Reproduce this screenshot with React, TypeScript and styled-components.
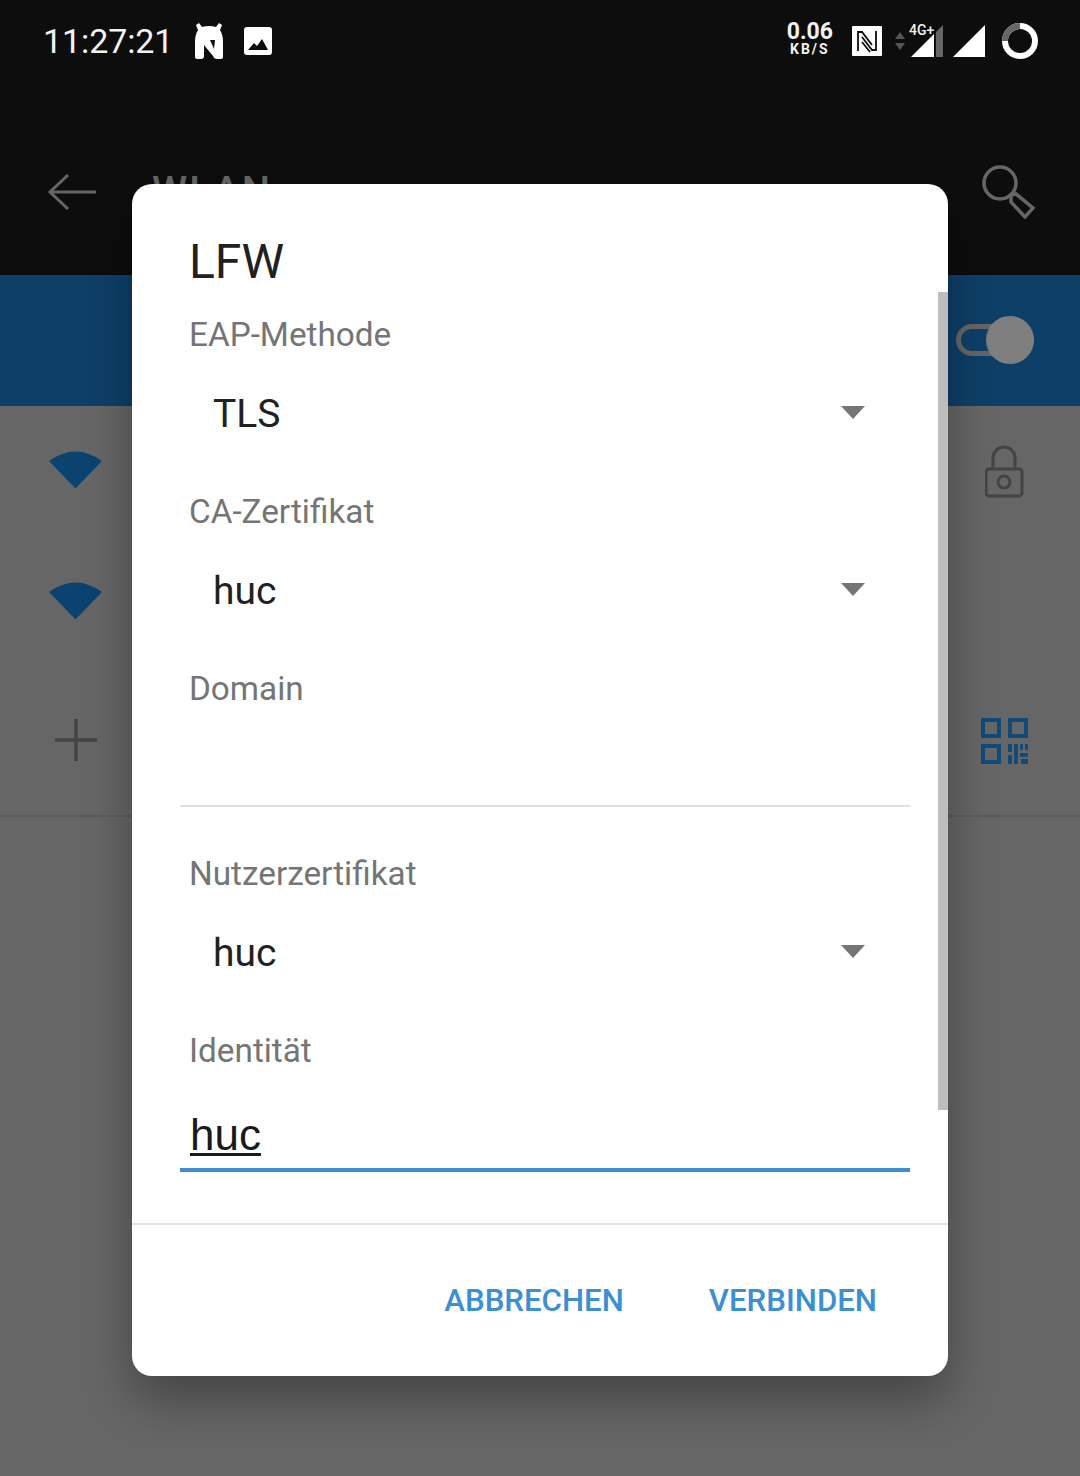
import React from "react";
import styled, { createGlobalStyle } from "styled-components";

const Global = createGlobalStyle`
  html, body { margin: 0; padding: 0; background: #666; }
  * { box-sizing: border-box; }
`;

const Page = styled.div`
  position: relative;
  width: 1080px;
  height: 1476px;
  overflow: hidden;
  background: #666666;
  font-family: Roboto, "Liberation Sans", sans-serif;
`;

const Top = styled.div`
  height: 275px;
  background: #0d0d0d;
  display: flex;
  flex-direction: column;
`;

const StatusBar = styled.div`
  height: 82px;
  display: flex;
  align-items: center;
  padding: 0 42px 0 43px;
`;

const Clock = styled.div`
  font-size: 34px;
  line-height: 40px;
  color: #f2f2f2;
  letter-spacing: -0.1px;
  margin-right: 1px;
`;

const StatusLeft = styled.div`
  display: flex;
  align-items: center;
  gap: 20px;
  flex: 1;
`;

const StatusRight = styled.div`
  display: flex;
  align-items: center;
`;

const StatusIcon = styled.svg<{ $mr?: number }>`
  margin-right: ${(p) => p.$mr ?? 0}px;
`;

const Speed = styled.div`
  display: flex;
  flex-direction: column;
  align-items: center;
  color: #f2f2f2;
  font-weight: 700;
  margin: 0 19px 7px 0;
`;

const SpeedValue = styled.span`
  font-size: 23px;
  line-height: 23px;
`;

const SpeedUnit = styled.span`
  font-size: 14px;
  line-height: 13px;
  letter-spacing: 2px;
`;

const SimWrap = styled.div`
  position: relative;
  width: 32px;
  height: 32px;
  margin: 0 10px 0 0;
`;

const SimLabel = styled.span`
  position: absolute;
  left: -2px;
  top: -3px;
  font-size: 14px;
  line-height: 16px;
  font-weight: 500;
  color: #f2f2f2;
  text-shadow: 0 0 2px #0d0d0d;
`;

const AppBar = styled.div`
  flex: 1;
  display: flex;
  align-items: center;
  padding: 26px 44px 0 48px;
`;

const AppTitle = styled.div`
  flex: 1;
  margin-left: 56px;
  font-size: 40px;
  font-weight: 500;
  color: #666;
  letter-spacing: 2px;
  line-height: 48px;
`;

const Band = styled.div`
  height: 131px;
  background: #0e3f68;
  display: flex;
  align-items: center;
  justify-content: flex-end;
  padding: 0 46px 2px 0;
`;

const Toggle = styled.div`
  position: relative;
  width: 78px;
  height: 32px;
  border: 5px solid #666;
  border-radius: 16px;
`;

const Thumb = styled.div`
  position: absolute;
  right: -5px;
  top: -13px;
  width: 48px;
  height: 48px;
  border-radius: 50%;
  background: #7f7f7f;
`;

const Row = styled.div<{ $h: number; $line?: boolean }>`
  height: ${(p) => p.$h}px;
  display: flex;
  align-items: center;
  justify-content: space-between;
  padding: 0 52px 0 48px;
  border-bottom: ${(p) => (p.$line ? "2px solid #5c5c5c" : "none")};
`;

const LeadSlot = styled.div`
  width: 55px;
  display: flex;
  justify-content: center;
`;

const TrailSlot = styled.div`
  width: 47px;
  display: flex;
  justify-content: center;
`;

const WifiIcon = styled.svg`
  margin-top: -6px;
`;

const PlusIcon = styled.svg`
  margin-top: -4px;
`;

const Dialog = styled.div`
  position: absolute;
  left: 132px;
  top: 184px;
  width: 816px;
  height: 1192px;
  background: #fff;
  border-radius: 20px;
  box-shadow: 0 24px 48px rgba(0, 0, 0, 0.32);
  display: flex;
  flex-direction: column;
`;

const Scrollbar = styled.div`
  position: absolute;
  right: 0;
  top: 108px;
  width: 10px;
  height: 818px;
  background: #bdbdbd;
`;

const Body = styled.div`
  flex: 1;
  padding: 48px 38px 0 48px;
  display: flex;
  flex-direction: column;
`;

const Title = styled.div`
  font-size: 48px;
  line-height: 60px;
  color: #212121;
  margin: 0 0 20px 9px;
`;

const Label = styled.div`
  font-size: 33.3px;
  line-height: 46px;
  color: #757575;
  margin-left: 9px;
`;

const SelectRow = styled.div<{ $mb: number }>`
  height: 112px;
  margin-bottom: ${(p) => p.$mb}px;
  display: flex;
  align-items: center;
  justify-content: space-between;
  padding: 0 45px 0 33px;
  font-size: 39px;
  color: #212121;
`;

const Arrow = styled.span`
  width: 0;
  height: 0;
  margin-top: -4px;
  border-left: 12px solid transparent;
  border-right: 12px solid transparent;
  border-top: 13px solid #757575;
`;

const Input = styled.div<{ $active?: boolean; $h: number; $mb: number }>`
  height: ${(p) => p.$h}px;
  margin-bottom: ${(p) => p.$mb}px;
  border-bottom: ${(p) => (p.$active ? "4px solid #3b8fd2" : "2px solid #e0e0e0")};
  padding: 0 0 8px 10px;
  display: flex;
  align-items: flex-end;
`;

const InputText = styled.span`
  font-family: "Liberation Sans", Arial, sans-serif;
  font-size: 44px;
  line-height: 50px;
  color: #1a1a1a;
  text-decoration: underline;
  text-decoration-thickness: 3px;
  text-underline-offset: 3px;
`;

const Footer = styled.div`
  height: 153px;
  border-top: 2px solid #e4e4e4;
  display: flex;
  align-items: center;
  justify-content: flex-end;
  gap: 85px;
  padding: 0 71px 0 0;
`;

const Action = styled.span`
  font-size: 31.2px;
  font-weight: 500;
  color: #3b8fd2;
`;

const Wifi = () => (
  <WifiIcon width="55" height="40" viewBox="0 0 55 40">
    <path d="M1 12 Q27.5 -7 54 12 L27.5 39.5 Z" fill="#0b4370" />
  </WifiIcon>
);

function App() {
  return (
    <Page>
      <Global />
      <Top>
        <StatusBar>
          <StatusLeft>
            <Clock>11:27:21</Clock>
            <svg width="30" height="37" viewBox="0 0 30 37">
              <path
                d="M5 0 L8 4 Q15 2 22 4 L25 0 L28 2 L26 7 Q29 12 29 19 V34 Q29 36 27 36 H23 Q20 36 19 33 L10 22 V33 Q10 36 7 36 H3 Q1 36 1 34 V19 Q1 12 4 7 L2 2 Z M16 17 L21 17 L20 26 Z"
                fill="#fff"
                fillRule="evenodd"
              />
            </svg>
            <svg width="28" height="28" viewBox="0 0 28 28">
              <rect width="28" height="28" rx="3" fill="#fff" />
              <path d="M4 23 l6 -7 l3 3 l5 -7 l6 11 z" fill="#0d0d0d" />
            </svg>
          </StatusLeft>
          <StatusRight>
            <Speed>
              <SpeedValue>0.06</SpeedValue>
              <SpeedUnit>KB/S</SpeedUnit>
            </Speed>
            <StatusIcon width="30" height="30" viewBox="0 0 30 30" $mr={12}>
              <rect width="30" height="30" rx="1" fill="#fff" />
              <g fill="none" stroke="#0d0d0d" strokeWidth="1.8">
                <path d="M6 25 V6 H10 L20 19" />
                <path d="M24 5 V24 H20 L10 11" />
                <path d="M10 16 L18 26" />
              </g>
            </StatusIcon>
            <StatusIcon width="12" height="20" viewBox="0 0 12 20" $mr={5}>
              <path d="M6 1 L11 8 H1 Z M6 19 L11 12 H1 Z" fill="#555" />
            </StatusIcon>
            <SimWrap>
              <svg width="32" height="32" viewBox="0 0 32 32">
                <path d="M0 32 L23 9 V32 Z" fill="#fff" />
                <path d="M25 7 L32 0 V32 H25 Z" fill="#666" />
              </svg>
              <SimLabel>4G+</SimLabel>
            </SimWrap>
            <StatusIcon width="32" height="32" viewBox="0 0 32 32" $mr={17}>
              <path d="M0 32 L32 0 V32 Z" fill="#fff" />
            </StatusIcon>
            <svg width="36" height="36" viewBox="0 0 36 36">
              <circle cx="18" cy="18" r="15" fill="none" stroke="#fff" strokeWidth="6" />
              <path d="M3 18 A15 15 0 0 1 18 3" fill="none" stroke="#666" strokeWidth="6" />
            </svg>
          </StatusRight>
        </StatusBar>
        <AppBar>
          <svg width="48" height="38" viewBox="0 0 48 38">
            <path d="M48 19 H2 M20 2 L2 19 L20 36" fill="none" stroke="#666" strokeWidth="3" />
          </svg>
          <AppTitle>WLAN</AppTitle>
          <svg width="54" height="54" viewBox="0 0 54 54">
            <circle cx="18" cy="18" r="16" fill="none" stroke="#666" strokeWidth="3.5" />
            <path d="M29 30 L34 29 L51 43 L43 52 L29 37 Z" fill="none" stroke="#666" strokeWidth="3.5" />
          </svg>
        </AppBar>
      </Top>
      <Band>
        <Toggle>
          <Thumb />
        </Toggle>
      </Band>
      <Row $h={131}>
        <LeadSlot>
          <Wifi />
        </LeadSlot>
        <TrailSlot>
          <svg width="40" height="54" viewBox="1 0 40 54">
            <path d="M9 24 V13 a11 11 0 0 1 22 0 V24" fill="none" stroke="#444" strokeWidth="3" />
            <rect x="2" y="24" width="36" height="27" rx="3" fill="none" stroke="#444" strokeWidth="3" />
            <circle cx="20" cy="37" r="6" fill="none" stroke="#444" strokeWidth="3" />
          </svg>
        </TrailSlot>
      </Row>
      <Row $h={131}>
        <LeadSlot>
          <Wifi />
        </LeadSlot>
      </Row>
      <Row $h={149} $line>
        <LeadSlot>
          <PlusIcon width="44" height="44" viewBox="0 0 44 44">
            <path d="M22 1 V43 M1 22 H43" stroke="#444" strokeWidth="3.5" fill="none" />
          </PlusIcon>
        </LeadSlot>
        <TrailSlot>
          <svg width="47" height="47" viewBox="0 0 47 47">
            <g fill="none" stroke="#124a78" strokeWidth="4">
              <rect x="2" y="2" width="16" height="16" />
              <rect x="29" y="2" width="16" height="16" />
              <rect x="2" y="28" width="16" height="16" />
            </g>
            <path
              d="M27 26 h4 v8 h-4 z M27 37 h4 v9 h-4 z M33 26 h4 v20 h-4 z M39 26 h3 v6 h-3 z M39 35 h8 v4 h-8 z M40 41 h7 v5 h-7 z M44 26 h3 v6 h-3 z"
              fill="#124a78"
            />
          </svg>
        </TrailSlot>
      </Row>
      <Dialog>
        <Scrollbar />
        <Body>
          <Title>LFW</Title>
          <Label>EAP-Methode</Label>
          <SelectRow $mb={19}>
            TLS
            <Arrow />
          </SelectRow>
          <Label>CA-Zertifikat</Label>
          <SelectRow $mb={19}>
            huc
            <Arrow />
          </SelectRow>
          <Label>Domain</Label>
          <Input $h={95} $mb={44} />
          <Label>Nutzerzertifikat</Label>
          <SelectRow $mb={19}>
            huc
            <Arrow />
          </SelectRow>
          <Label>Identität</Label>
          <Input $active $h={98} $mb={0}>
            <InputText>huc</InputText>
          </Input>
        </Body>
        <Footer>
          <Action>ABBRECHEN</Action>
          <Action>VERBINDEN</Action>
        </Footer>
      </Dialog>
    </Page>
  );
}

export default App;
